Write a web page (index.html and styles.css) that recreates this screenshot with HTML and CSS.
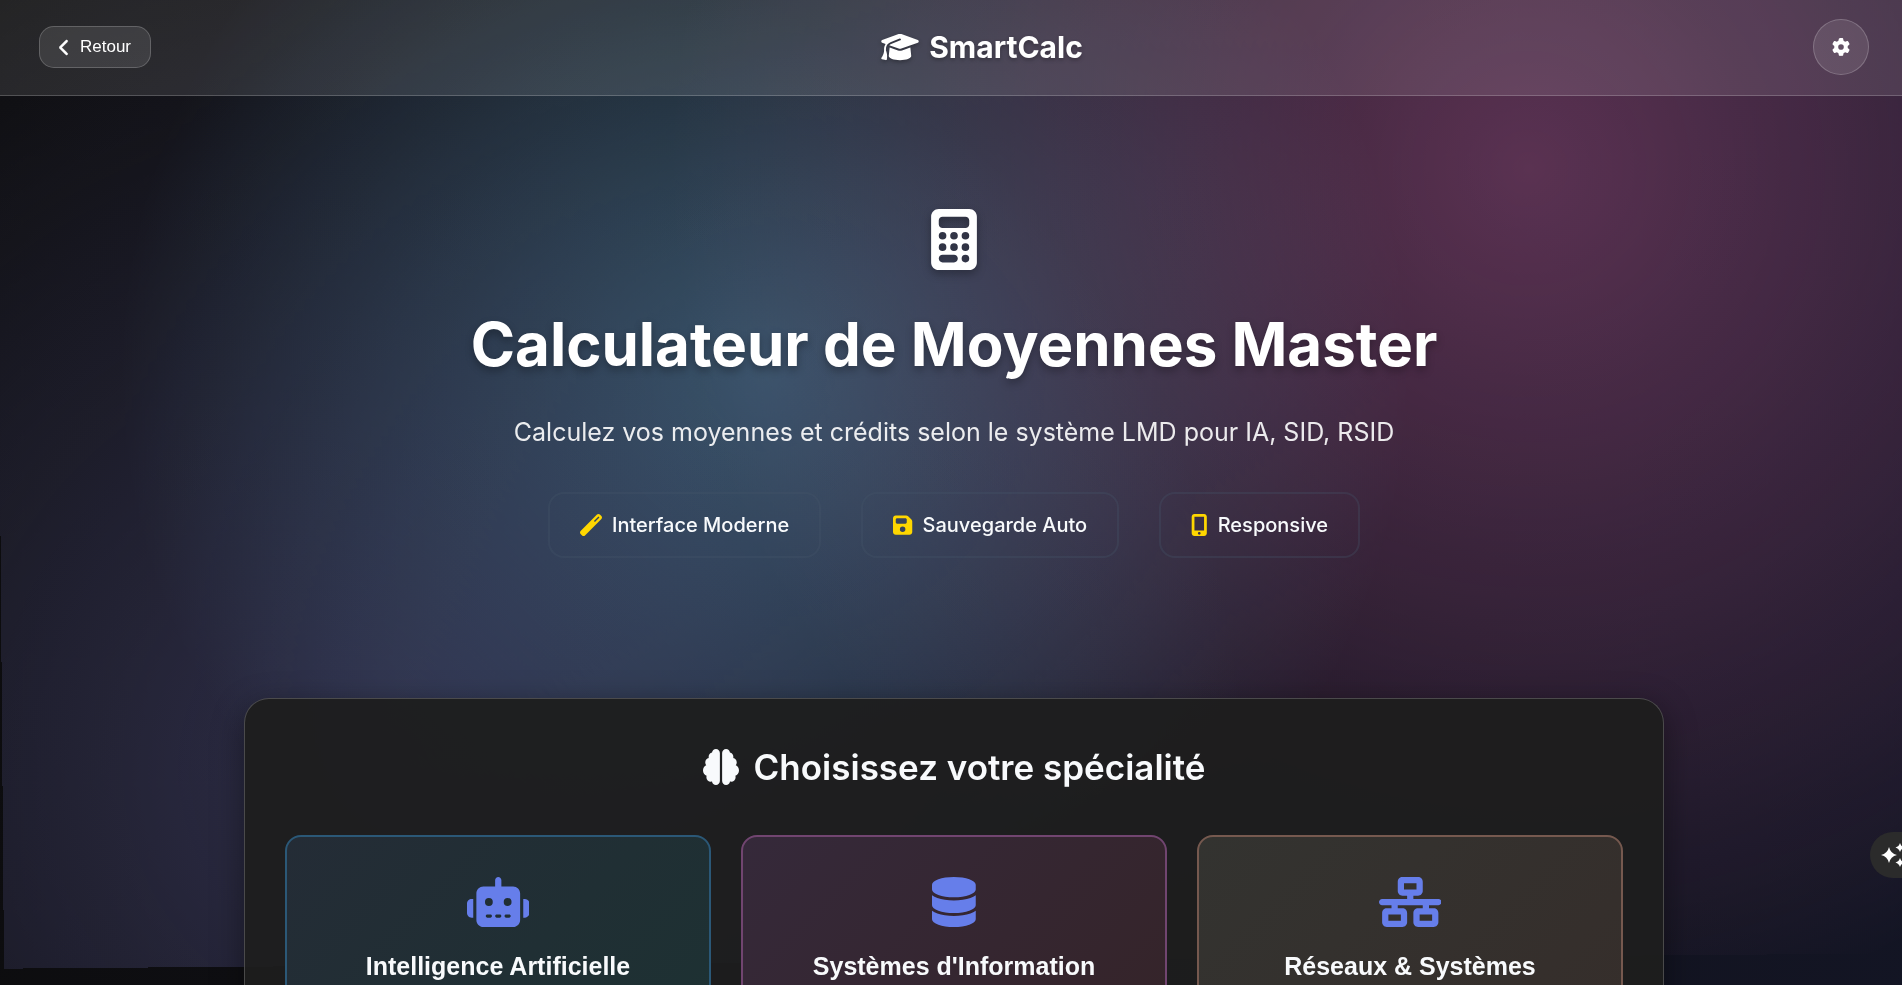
FILE: index.html
```html
<!DOCTYPE html>
<html lang="fr">
<head>
<meta charset="utf-8">
<title>SmartCalc</title>
<meta name="viewport" content="width=device-width, initial-scale=1">
<link rel="stylesheet" href="styles.css">
</head>
<body>
<div class="backdrop" aria-hidden="true"></div>

<header class="topbar">
  <button class="back-btn" type="button">
    <svg class="back-icon" viewBox="0 0 320 512" aria-hidden="true"><path d="M9.4 233.4c-12.5 12.5-12.5 32.8 0 45.300l192 192c12.500 12.500 32.800 12.500 45.300 0s12.500-32.800 0-45.300L77.300 256 246.600 86.600c12.500-12.500 12.500-32.800 0-45.300s-32.800-12.500-45.300 0l-192 192z"/></svg>
    <span>Retour</span>
  </button>
  <div class="brand">
    <svg class="brand-icon" viewBox="0 0 640 512" aria-hidden="true"><path d="M320 32c-8.100 0-16.100 1.400-23.700 4.100L15.800 137.400C6.300 140.900 0 149.900 0 160s6.300 19.100 15.800 22.600l57.900 20.900C57.300 229.300 48 259.800 48 291.900V320c0 28.400-10.800 57.700-22.300 80.800c-6.500 13-13.900 25.800-22.500 37.600C0 442.700-.9 448.300 .9 453.400s6 8.900 11.200 10.200l64 16c4.200 1.100 8.700 .3 12.400-2s6.300-6.100 7.100-10.400c8.600-42.800 4.300-81.200-2.100-108.700C90.300 344.300 86 329.800 80 316.500V291.900c0-30.200 10.200-58.700 27.900-81.500c12.900-15.500 29.600-28 49.200-35.700l157-61.700c8.200-3.200 17.500 .8 20.700 9s-.8 17.500-9 20.700l-157 61.700c-12.400 4.900-23.300 12.400-32.200 21.600l159.600 57.600c7.600 2.700 15.600 4.100 23.700 4.100s16.100-1.400 23.700-4.100L624.200 182.600c9.500-3.400 15.800-12.500 15.800-22.600s-6.300-19.100-15.800-22.600L343.700 36.100C336.100 33.400 328.100 32 320 32zM128 408c0 35.300 86 72 192 72s192-36.700 192-72L496.700 262.600 354.500 314c-11.100 4-22.800 6-34.500 6s-23.500-2-34.500-6L143.300 262.600 128 408z"/></svg>
    <span>SmartCalc</span>
  </div>
  <button class="settings-btn" type="button" aria-label="Paramètres">
    <svg class="settings-icon" viewBox="0 0 512 512" aria-hidden="true"><path d="M495.900 166.600c3.200 8.700 .5 18.400-6.400 24.600l-43.300 39.400c1.100 8.300 1.700 16.800 1.700 25.400s-.6 17.100-1.700 25.400l43.300 39.400c6.900 6.200 9.600 15.900 6.400 24.600c-4.400 11.900-9.700 23.300-15.800 34.300l-4.700 8.100c-6.600 11-14 21.400-22.100 31.200c-5.900 7.200-15.700 9.600-24.500 6.800l-55.700-17.700c-13.400 10.300-28.200 18.900-44 25.400l-12.500 57.100c-2 9.100-9 16.300-18.200 17.800c-13.800 2.300-28 3.500-42.500 3.500s-28.700-1.200-42.500-3.500c-9.200-1.500-16.200-8.700-18.200-17.800l-12.500-57.100c-15.800-6.500-30.600-15.100-44-25.400L83.100 425.900c-8.800 2.800-18.600 .3-24.500-6.800c-8.100-9.800-15.500-20.200-22.100-31.200l-4.700-8.100c-6.100-11-11.400-22.400-15.800-34.300c-3.200-8.700-.5-18.400 6.400-24.600l43.300-39.400C64.600 273.100 64 264.600 64 256s.6-17.100 1.700-25.400L22.400 191.200c-6.900-6.200-9.600-15.900-6.400-24.600c4.400-11.900 9.700-23.300 15.800-34.300l4.700-8.100c6.600-11 14-21.400 22.100-31.200c5.900-7.200 15.700-9.600 24.500-6.800l55.700 17.700c13.400-10.300 28.200-18.900 44-25.400l12.500-57.100c2-9.100 9-16.300 18.200-17.800C227.300 1.200 241.500 0 256 0s28.700 1.200 42.500 3.500c9.200 1.500 16.200 8.700 18.200 17.800l12.500 57.100c15.800 6.500 30.600 15.100 44 25.400l55.700-17.700c8.800-2.800 18.600-.3 24.500 6.800c8.100 9.800 15.500 20.200 22.100 31.200l4.700 8.100c6.100 11 11.400 22.400 15.800 34.300zM256 336a80 80 0 1 0 0-160 80 80 0 1 0 0 160z"/></svg>
  </button>
</header>

<main class="page">
  <section class="hero">
    <svg class="hero-icon" viewBox="0 0 384 512" aria-hidden="true"><path fill-rule="evenodd" d="M64 0C28.700 0 0 28.700 0 64V448c0 35.300 28.700 64 64 64H320c35.300 0 64-28.700 64-64V64c0-35.300-28.700-64-64-64H64zM96 64H288c17.700 0 32 14.300 32 32v32c0 17.700-14.300 32-32 32H96c-17.700 0-32-14.300-32-32V96c0-17.700 14.300-32 32-32zM64 224a32 32 0 1 1 64 0 32 32 0 1 1-64 0zM160 224a32 32 0 1 1 64 0 32 32 0 1 1-64 0zM256 224a32 32 0 1 1 64 0 32 32 0 1 1-64 0zM64 320a32 32 0 1 1 64 0 32 32 0 1 1-64 0zM160 320a32 32 0 1 1 64 0 32 32 0 1 1-64 0zM256 320a32 32 0 1 1 64 0 32 32 0 1 1-64 0zM256 416a32 32 0 1 1 64 0 32 32 0 1 1-64 0zM64 416c0-17.700 14.300-32 32-32h96c17.700 0 32 14.300 32 32s-14.300 32-32 32H96c-17.700 0-32-14.300-32-32z"/></svg>
    <h1 class="hero-title">Calculateur de Moyennes Master</h1>
    <p class="hero-text">Calculez vos moyennes et crédits selon le système LMD pour IA, SID, RSID</p>
    <ul class="features">
      <li class="feature">
        <svg class="feature-icon" viewBox="0 0 512 512" aria-hidden="true"><path d="M14.100 463.300c-18.700-18.700-18.700-49.100 0-67.900L395.400 14.100c18.700-18.700 49.100-18.700 67.900 0l34.600 34.600c18.700 18.700 18.700 49.100 0 67.900L116.500 497.900c-18.700 18.700-49.100 18.700-67.900 0L14.100 463.300zM347.600 187.600l105-105L429.400 59.300l-105 105 23.300 23.300z"/></svg>
        <span>Interface Moderne</span>
      </li>
      <li class="feature">
        <svg class="feature-icon" viewBox="0 0 448 512" aria-hidden="true"><path d="M64 32C28.700 32 0 60.700 0 96V416c0 35.300 28.700 64 64 64H384c35.300 0 64-28.700 64-64V173.300c0-17-6.700-33.300-18.700-45.300L352 50.700C340 38.700 323.700 32 306.700 32H64zm0 96c0-17.700 14.300-32 32-32H288c17.700 0 32 14.300 32 32v64c0 17.700-14.300 32-32 32H96c-17.700 0-32-14.300-32-32V128zM224 288a64 64 0 1 1 0 128 64 64 0 1 1 0-128z" fill-rule="evenodd"/></svg>
        <span>Sauvegarde Auto</span>
      </li>
      <li class="feature">
        <svg class="feature-icon" viewBox="0 0 384 512" aria-hidden="true"><path fill-rule="evenodd" d="M16 64C16 28.700 44.700 0 80 0H304c35.300 0 64 28.700 64 64V448c0 35.300-28.700 64-64 64H80c-35.300 0-64-28.700-64-64V64zM224 448a32 32 0 1 0 -64 0 32 32 0 1 0 64 0zM304 64H80V384H304V64z"/></svg>
        <span>Responsive</span>
      </li>
    </ul>
  </section>

  <section class="panel">
    <h2 class="panel-title">
      <svg class="panel-icon" viewBox="0 0 512 512" aria-hidden="true"><path d="M184 0c30.900 0 56 25.100 56 56V456c0 30.900-25.100 56-56 56c-28.900 0-52.700-21.900-55.700-50.100c-5.200 1.400-10.700 2.100-16.300 2.100c-35.300 0-64-28.700-64-64c0-7.400 1.300-14.600 3.600-21.200C21.400 367.400 0 338.200 0 304c0-31.900 18.700-59.500 45.800-72.300C37.100 220.800 32 207 32 192c0-30.700 21.600-56.300 50.400-62.600C80.800 123.900 80 118 80 112c0-29.900 20.600-55.100 48.300-62.100C131.300 21.900 155.100 0 184 0zM328 0c28.900 0 52.600 21.900 55.700 49.900c27.800 7 48.300 32.100 48.300 62.100c0 6-.8 11.900-2.400 17.400c28.800 6.200 50.400 31.900 50.400 62.600c0 15-5.100 28.800-13.800 39.700C493.300 244.500 512 272.100 512 304c0 34.200-21.400 63.400-51.600 74.800c2.300 6.600 3.600 13.800 3.600 21.200c0 35.300-28.700 64-64 64c-5.600 0-11.100-.7-16.300-2.100c-3 28.200-26.800 50.100-55.700 50.100c-30.900 0-56-25.100-56-56V56c0-30.900 25.100-56 56-56z"/></svg>
      <span>Choisissez votre spécialité</span>
    </h2>
    <div class="cards">
      <article class="card card-ai">
        <svg class="card-icon" viewBox="0 0 640 512" aria-hidden="true"><path fill-rule="evenodd" d="M320 0c17.700 0 32 14.300 32 32V96H472c39.800 0 72 32.200 72 72V440c0 39.800-32.200 72-72 72H168c-39.800 0-72-32.200-72-72V168c0-39.800 32.200-72 72-72H288V32c0-17.700 14.300-32 32-32zM208 384c-8.800 0-16 7.200-16 16s7.200 16 16 16h32c8.800 0 16-7.200 16-16s-7.200-16-16-16H208zm96 0c-8.800 0-16 7.200-16 16s7.200 16 16 16h32c8.800 0 16-7.200 16-16s-7.200-16-16-16H304zm96 0c-8.800 0-16 7.200-16 16s7.200 16 16 16h32c8.800 0 16-7.200 16-16s-7.200-16-16-16H400zM264 256a40 40 0 1 0 -80 0 40 40 0 1 0 80 0zm152 40a40 40 0 1 0 0-80 40 40 0 1 0 0 80zM48 224H64V416H48c-26.500 0-48-21.500-48-48V272c0-26.500 21.500-48 48-48zm544 0c26.500 0 48 21.500 48 48v96c0 26.500-21.500 48-48 48H576V224h16z"/></svg>
        <h3 class="card-title">Intelligence Artificielle</h3>
      </article>
      <article class="card card-is">
        <svg class="card-icon" viewBox="0 0 448 512" aria-hidden="true"><path d="M448 80v48c0 44.200-100.300 80-224 80S0 172.200 0 128V80C0 35.800 100.300 0 224 0S448 35.800 448 80zM393.200 214.700c20.800-7.400 39.900-16.900 54.800-28.600V288c0 44.200-100.300 80-224 80S0 332.200 0 288V186.100c14.900 11.800 34 21.200 54.800 28.600C99.700 230.700 159.500 240 224 240s124.300-9.300 169.200-25.300zM0 346.100c14.900 11.800 34 21.200 54.800 28.600C99.700 390.700 159.500 400 224 400s124.300-9.300 169.200-25.300c20.800-7.400 39.900-16.900 54.800-28.600V432c0 44.200-100.300 80-224 80S0 476.200 0 432V346.100z"/></svg>
        <h3 class="card-title">Systèmes d'Information</h3>
      </article>
      <article class="card card-net">
        <svg class="card-icon" viewBox="0 0 640 512" aria-hidden="true"><path fill-rule="evenodd" d="M256 64H384v64H256V64zM240 0c-26.500 0-48 21.500-48 48v96c0 26.500 21.500 48 48 48h48v32H32c-17.700 0-32 14.300-32 32s14.300 32 32 32h96v32H80c-26.500 0-48 21.500-48 48v96c0 26.500 21.500 48 48 48H240c26.500 0 48-21.500 48-48V368c0-26.500-21.500-48-48-48H192V288H448v32H400c-26.500 0-48 21.500-48 48v96c0 26.500 21.500 48 48 48H560c26.500 0 48-21.500 48-48V368c0-26.500-21.500-48-48-48H512V288h96c17.700 0 32-14.300 32-32s-14.300-32-32-32H352V192h48c26.500 0 48-21.500 48-48V48c0-26.500-21.500-48-48-48H240zM96 448V384H224v64H96zm320-64H544v64H416V384z"/></svg>
        <h3 class="card-title">Réseaux &amp; Systèmes</h3>
      </article>
    </div>
  </section>
</main>

<button class="assist-btn" type="button" aria-label="Assistant">
  <svg class="assist-icon" viewBox="0 0 26 26" aria-hidden="true"><path d="M9 5Q10.500 11.500 17 13Q10.500 14.500 9 21Q7.500 14.500 1 13Q7.500 11.500 9 5zM20 1Q21 4.500 24.500 5.500Q21 6.500 20 10Q19 6.500 15.500 5.500Q19 4.500 20 1zM20 16Q21 19.500 24.500 20.500Q21 21.500 20 25Q19 21.500 15.500 20.500Q19 19.500 20 16z"/></svg>
</button>
</body>
</html>
```

FILE: styles.css
```css
* {
  box-sizing: border-box;
  margin: 0;
  padding: 0;
}

html {
  background: #0c0c0c;
  scrollbar-width: none;
}

body {
  position: relative;
  z-index: 0;
  min-height: 100vh;
  color: #fff;
  font-family: Inter, "Liberation Sans", sans-serif;
  background: linear-gradient(100deg, #0c0c0d 0%, #12121c 60%, #131524 100%);
}

svg {
  display: block;
  fill: currentColor;
}

button {
  font: inherit;
  color: inherit;
  cursor: pointer;
}

.backdrop {
  position: fixed;
  inset: 0 -12px 0 0;
  z-index: -1;
  transform: translateY(-24px) rotate(-0.46deg);
  background:
    radial-gradient(circle at 20% 80%, rgba(120, 119, 198, 0.3), transparent 50%),
    radial-gradient(circle at 80% 20%, rgba(255, 119, 198, 0.3), transparent 50%),
    radial-gradient(circle at 40% 40%, rgba(120, 219, 255, 0.3), transparent 50%);
}

.topbar {
  display: flex;
  align-items: center;
  justify-content: space-between;
  padding: 19px 33px 20px 39px;
  background: rgba(255, 255, 255, 0.1);
  border-bottom: 1px solid rgba(255, 255, 255, 0.2);
}

.back-btn {
  display: flex;
  align-items: center;
  gap: 10px;
  height: 42px;
  padding: 0 19px;
  font-family: "Liberation Sans", Arial, sans-serif;
  font-size: 17px;
  background: rgba(255, 255, 255, 0.1);
  border: 1px solid rgba(255, 255, 255, 0.2);
  border-radius: 15px;
}

.back-icon {
  width: 11px;
  height: 17px;
  stroke: currentColor;
  stroke-width: 16px;
}

.brand {
  display: flex;
  align-items: center;
  gap: 10px;
  font-size: 30px;
  font-weight: 700;
  text-shadow: 0 2px 4px rgba(0, 0, 0, 0.3);
}

.brand-icon {
  width: 38px;
  height: 30px;
  filter: drop-shadow(0 2px 2px rgba(0, 0, 0, 0.3));
}

.settings-btn {
  display: grid;
  place-items: center;
  width: 56px;
  height: 56px;
  background: rgba(255, 255, 255, 0.1);
  border: 1px solid rgba(255, 255, 255, 0.2);
  border-radius: 50%;
}

.settings-icon {
  width: 18px;
  height: 18px;
}

.page {
  padding-left: 6px;
}

.hero {
  display: flex;
  flex-direction: column;
  align-items: center;
  padding: 113px 24px 140px;
  text-align: center;
}

.hero-icon {
  width: 46px;
  height: 61px;
  filter: drop-shadow(0 4px 4px rgba(0, 0, 0, 0.3));
}

.hero-title {
  margin-top: 38px;
  font-size: 60px;
  font-weight: 700;
  line-height: 72px;
  text-shadow: 0 4px 8px rgba(0, 0, 0, 0.3);
}

.hero-text {
  margin-top: 32px;
  font-size: 25px;
  line-height: 40px;
  opacity: 0.9;
}

.features {
  display: flex;
  flex-wrap: wrap;
  justify-content: center;
  gap: 40px;
  margin-top: 40px;
  list-style: none;
}

.feature {
  display: flex;
  align-items: center;
  gap: 10px;
  height: 66px;
  padding: 0 30px;
  font-size: 20px;
  font-weight: 500;
  color: #f8fafc;
  border: 2px solid rgba(71, 85, 105, 0.3);
  border-radius: 16px;
}

.feature-icon {
  height: 22px;
  color: #ffd700;
}

.panel {
  width: calc(100% - 48px);
  max-width: 1420px;
  margin: 0 auto;
  padding: 48px 40px;
  background: rgba(30, 30, 30, 0.95);
  border: 1px solid rgba(255, 255, 255, 0.2);
  border-radius: 25px;
  box-shadow: 0 8px 32px rgba(0, 0, 0, 0.4);
}

.panel-title {
  display: flex;
  align-items: center;
  justify-content: center;
  gap: 15px;
  font-size: 35px;
  font-weight: 600;
  line-height: 40px;
  color: #f8fafc;
}

.panel-icon {
  width: 36px;
  height: 36px;
}

.cards {
  display: grid;
  grid-template-columns: repeat(3, 1fr);
  gap: 30px;
  margin-top: 48px;
}

.card {
  display: flex;
  flex-direction: column;
  align-items: center;
  gap: 24px;
  min-height: 300px;
  padding: 40px 24px;
  border: 2px solid;
  border-radius: 16px;
}

.card-ai {
  border-color: #2b5877;
  background: linear-gradient(135deg, #242c36, #1c3232);
}

.card-is {
  border-color: #714570;
  background: linear-gradient(135deg, #35293a, #352326);
}

.card-net {
  border-color: #76594f;
  background: linear-gradient(135deg, #333330, #362d2a);
}

.card-icon {
  height: 50px;
  color: #667eea;
}

.card-title {
  font-family: "Liberation Sans", Arial, sans-serif;
  font-size: 25px;
  font-weight: 700;
  line-height: 30px;
  color: #f8fafc;
}

/* Assistant tab, partly tucked under the right edge */
.assist-btn {
  position: fixed;
  top: 832px;
  right: -28px;
  display: flex;
  align-items: center;
  width: 60px;
  height: 46px;
  padding: 0 10px;
  border: 0;
  border-radius: 23px;
  background: #2b2b2b;
}

.assist-icon {
  flex: none;
  width: 26px;
  height: 26px;
}
```
